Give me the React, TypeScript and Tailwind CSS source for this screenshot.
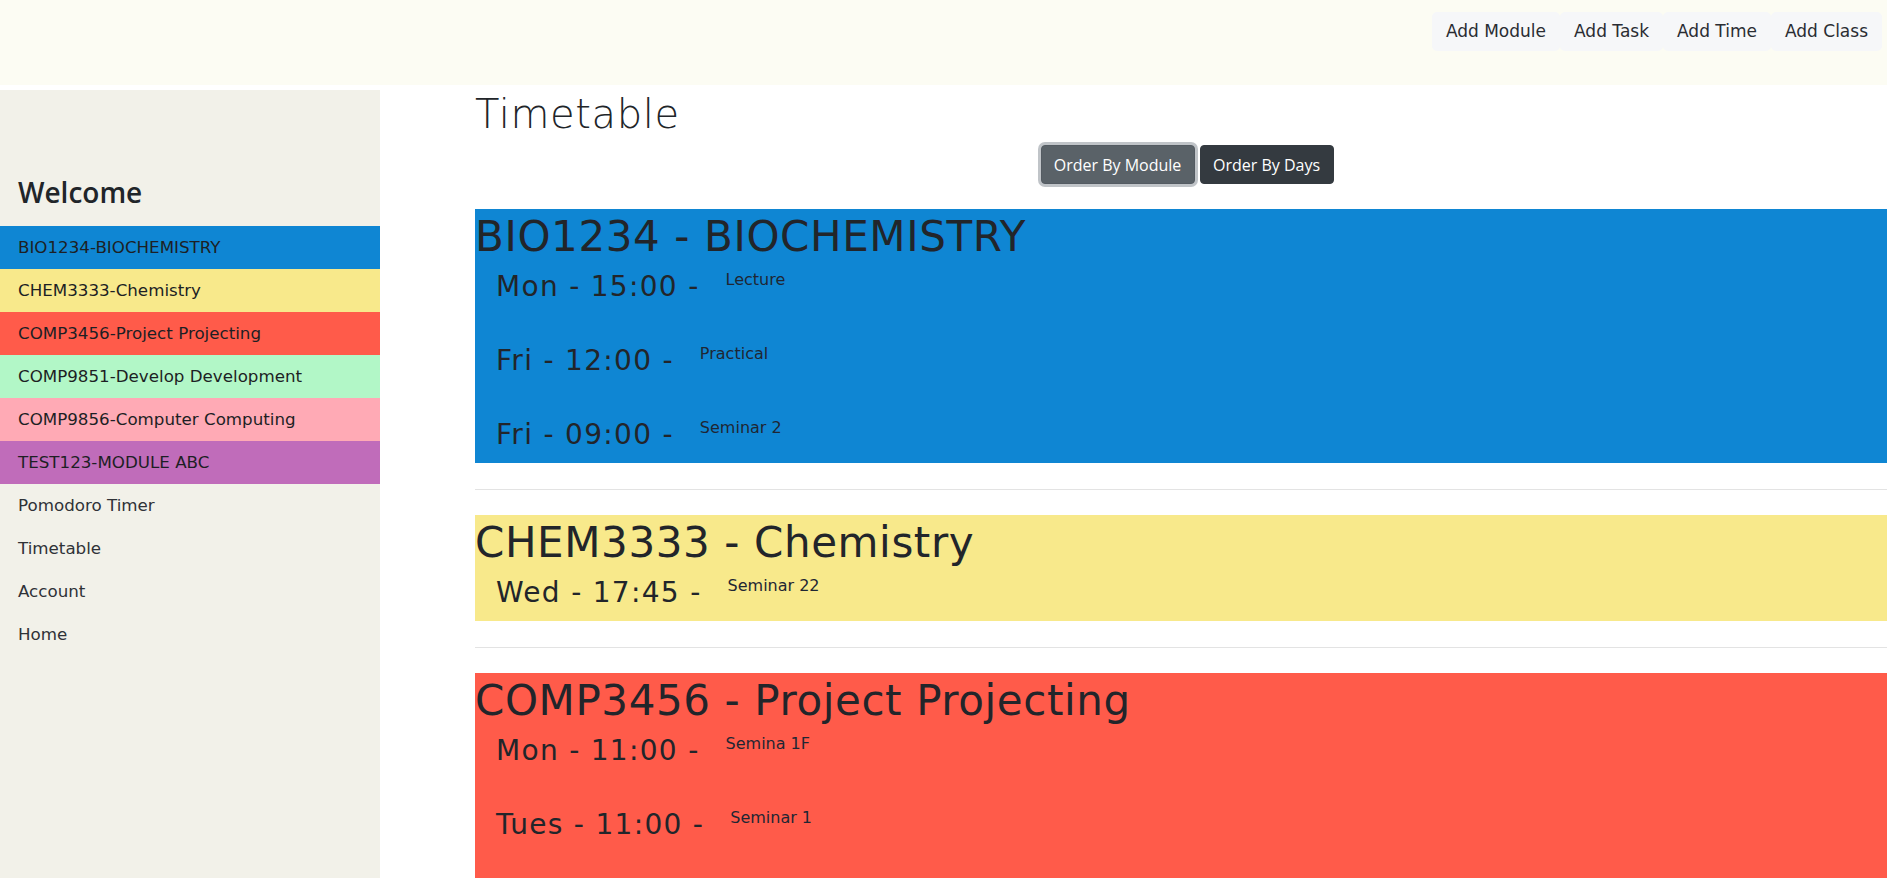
import React from "react";

type Row = { day: string; note: string };
type Mod = { title: string; bg: string; rows: Row[]; pad: string };

const modules: Mod[] = [
  {
    title: "BIO1234 - BIOCHEMISTRY",
    bg: "bg-[#0f86d3]",
    pad: "pb-[6px]",
    rows: [
      { day: "Mon - 15:00 -", note: "Lecture" },
      { day: "Fri - 12:00 -", note: "Practical" },
      { day: "Fri - 09:00 -", note: "Seminar 2" },
    ],
  },
  {
    title: "CHEM3333 - Chemistry",
    bg: "bg-[#f8e98b]",
    pad: "pb-[6px]",
    rows: [{ day: "Wed - 17:45 -", note: "Seminar 22" }],
  },
  {
    title: "COMP3456 - Project Projecting",
    bg: "bg-[#ff5b4a]",
    pad: "pb-[60px]",
    rows: [
      { day: "Mon - 11:00 -", note: "Semina 1F" },
      { day: "Tues - 11:00 -", note: "Seminar 1" },
    ],
  },
];

const sideMods = [
  { label: "BIO1234-BIOCHEMISTRY", bg: "bg-[#0f86d3]" },
  { label: "CHEM3333-Chemistry", bg: "bg-[#f8e98b]" },
  { label: "COMP3456-Project Projecting", bg: "bg-[#ff5b4a]" },
  { label: "COMP9851-Develop Development", bg: "bg-[#b2f7c7]" },
  { label: "COMP9856-Computer Computing", bg: "bg-[#ffaab5]" },
  { label: "TEST123-MODULE ABC", bg: "bg-[#c06cba]" },
];

const sideLinks = ["Pomodoro Timer", "Timetable", "Account", "Home"];
const navLinks = ["Add Module", "Add Task", "Add Time", "Add Class"];

const gothic = "font-['DejaVu_Sans',sans-serif]";

export default function App() {
  return (
    <div className={`min-h-screen bg-white text-[#212529] ${gothic}`}>
      <header className="h-[85px] bg-[#fcfcf3] flex justify-end items-start pt-[12px] pr-[5px]">
        <nav className="flex">
          {navLinks.map((n) => (
            <a
              key={n}
              className="h-[39px] flex items-center px-[14px] bg-[#f6f7f9] rounded-[5px] text-[17px] text-[#2a2d33] whitespace-nowrap"
            >
              {n}
            </a>
          ))}
        </nav>
      </header>

      <div className="flex mt-[5px] min-h-[788px]">
        <aside className="w-[380px] shrink-0 bg-[#f2f1e9]">
          <h3 className="pt-[85px] pl-[18px] mb-[17px] text-[28px] leading-[34px] font-semibold font-['Open_Sans',sans-serif] text-[#212529]">
            Welcome
          </h3>
          {sideMods.map((m) => (
            <div
              key={m.label}
              className={`h-[43px] flex items-center pl-[18px] text-[16.7px] text-[#1d1f24] ${m.bg}`}
            >
              {m.label}
            </div>
          ))}
          {sideLinks.map((l) => (
            <div key={l} className="h-[43px] flex items-center pl-[18px] text-[16.7px] text-[#2f3237]">
              {l}
            </div>
          ))}
        </aside>

        <main className="flex-1 min-w-0 pl-[95px]">
          <h1 className="text-[40px] leading-[48px] font-extralight tracking-[0.6px] text-[#212529]">Timetable</h1>
          <div className="mt-[7px] flex justify-center pl-[12px] gap-[5px] font-['Open_Sans',sans-serif]">
            <button className="h-[39px] w-[154px] rounded-[4px] bg-[#5a6268] border border-[#545b62] text-white text-[16px] shadow-[0_0_0_3px_rgba(130,138,145,0.5)]">
              Order By Module
            </button>
            <button className="h-[39px] w-[134px] rounded-[4px] bg-[#343a40] border border-[#343a40] text-white text-[16px]">
              Order By Days
            </button>
          </div>

          <div className="mt-[25px]">
            {modules.map((m, i) => (
              <div key={m.title}>
                {i > 0 && <hr className="mt-[26px] mb-[25px] border-0 border-t border-[#e3e3e3]" />}
                <section className={`${m.bg} ${m.pad}`}>
                  <h2 className="text-[42px] leading-[55px] tracking-[0.6px] text-[#22252a] whitespace-nowrap">
                    {m.title}
                  </h2>
                  <div className="flex flex-col gap-[29px]">
                    {m.rows.map((r) => (
                      <div key={r.day + r.note} className="flex items-start pl-[21px]">
                        <span className="text-[28px] leading-[45px] tracking-[1.3px] text-[#22252a] whitespace-nowrap">
                          {r.day}
                        </span>
                        <span className="ml-[26px] mt-[6px] text-[16px] leading-[20px] text-[#1f2633] whitespace-nowrap">
                          {r.note}
                        </span>
                      </div>
                    ))}
                  </div>
                </section>
              </div>
            ))}
          </div>
        </main>
      </div>
    </div>
  );
}
